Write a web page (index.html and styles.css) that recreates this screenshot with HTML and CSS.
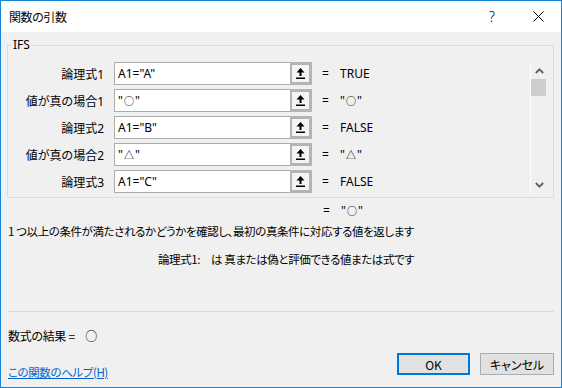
FILE: index.html
```html
<!DOCTYPE html>
<html>
<head>
<link rel="stylesheet" href="styles.css">
</head>
<body>

<div class="dialog">
  <div class="titlebar">
    <span class="title">関数の引数</span>
    <span class="tb-btn help">?</span>
    <span class="tb-btn close">
      <svg width="11" height="11" viewBox="0 0 11 11"><path d="M0.5 0.5 L10.5 10.5 M10.5 0.5 L0.5 10.5" stroke="#000" stroke-width="1" fill="none"/></svg>
    </span>
  </div>

  <div class="content">
    <fieldset class="group">
      <legend>IFS</legend>
      <div class="args">
        <div class="rows">
          <div class="row">
            <label>論理式1</label>
            <div class="field"><span class="text">A1="A"</span><span class="ref"><svg width="9" height="11" viewBox="0 0 9 11"><path d="M4.5 0 L0.5 4.5 L3.5 4.5 L3.5 8 L5.5 8 L5.5 4.5 L8.5 4.5 Z M0 9.5 H9 V11 H0 Z" fill="#000"/></svg></span></div>
            <span class="eq">=</span><span class="val">TRUE</span>
          </div>
          <div class="row">
            <label>値が真の場合1</label>
            <div class="field"><span class="text">"<span class="mark">○</span>"</span><span class="ref"><svg width="9" height="11" viewBox="0 0 9 11"><path d="M4.5 0 L0.5 4.5 L3.5 4.5 L3.5 8 L5.5 8 L5.5 4.5 L8.5 4.5 Z M0 9.5 H9 V11 H0 Z" fill="#000"/></svg></span></div>
            <span class="eq">=</span><span class="val">"<span class="mark">○</span>"</span>
          </div>
          <div class="row">
            <label>論理式2</label>
            <div class="field"><span class="text">A1="B"</span><span class="ref"><svg width="9" height="11" viewBox="0 0 9 11"><path d="M4.5 0 L0.5 4.5 L3.5 4.5 L3.5 8 L5.5 8 L5.5 4.5 L8.5 4.5 Z M0 9.5 H9 V11 H0 Z" fill="#000"/></svg></span></div>
            <span class="eq">=</span><span class="val">FALSE</span>
          </div>
          <div class="row">
            <label>値が真の場合2</label>
            <div class="field"><span class="text">"<span class="mark">△</span>"</span><span class="ref"><svg width="9" height="11" viewBox="0 0 9 11"><path d="M4.5 0 L0.5 4.5 L3.5 4.5 L3.5 8 L5.5 8 L5.5 4.5 L8.5 4.5 Z M0 9.5 H9 V11 H0 Z" fill="#000"/></svg></span></div>
            <span class="eq">=</span><span class="val">"<span class="mark">△</span>"</span>
          </div>
          <div class="row">
            <label>論理式3</label>
            <div class="field"><span class="text">A1="C"</span><span class="ref"><svg width="9" height="11" viewBox="0 0 9 11"><path d="M4.5 0 L0.5 4.5 L3.5 4.5 L3.5 8 L5.5 8 L5.5 4.5 L8.5 4.5 Z M0 9.5 H9 V11 H0 Z" fill="#000"/></svg></span></div>
            <span class="eq">=</span><span class="val">FALSE</span>
          </div>
        </div>
        <div class="scrollbar">
          <div class="sb-arrow"><svg width="9" height="6" viewBox="0 0 9 6"><polyline points="0.8,5 4.5,1.3 8.2,5" stroke="#606060" stroke-width="1.8" fill="none"/></svg></div>
          <div class="sb-thumb"></div>
          <div class="sb-track"></div>
          <div class="sb-arrow"><svg width="9" height="6" viewBox="0 0 9 6"><polyline points="0.8,1 4.5,4.7 8.2,1" stroke="#606060" stroke-width="1.8" fill="none"/></svg></div>
        </div>
      </div>
    </fieldset>

    <div class="result-line"><span class="eq">=</span><span class="val">"<span class="mark">○</span>"</span></div>
    <p class="desc">1 つ以上の条件が満たされるかどうかを確認し、最初の真条件に対応する値を返します</p>
    <p class="hint"><span class="hint-name">論理式1:</span><span class="hint-text">は 真または偽と評価できる値または式です</span></p>
    <hr class="sep">
    <p class="formula">数式の結果 = <span class="formula-val">○</span></p>

    <div class="footer">
      <a class="help-link" href="#">この関数のヘルプ(H)</a>
      <button class="btn btn-ok">OK</button>
      <button class="btn">キャンセル</button>
    </div>
  </div>
</div>

</body>
</html>
```

FILE: styles.css
```css
body {
  margin: 0;
  font-family: "Noto Sans", "Noto Sans CJK JP", sans-serif;
  font-size: 12px;
  color: #000;
  background: #f0f0f0;
}

.dialog {
  width: 562px;
  height: 388px;
  box-sizing: border-box;
  border: 1px solid #1883d7;
  background: #f0f0f0;
  overflow: hidden;
}

.titlebar {
  height: 31px;
  background: #fff;
  display: flex;
  align-items: center;
}

.title {
  font-family: "Noto Sans CJK JP", sans-serif;
  font-feature-settings: "palt";
  letter-spacing: -0.4px;
  padding-left: 8px;
  flex: 1;
}

.tb-btn {
  width: 46px;
  height: 31px;
  display: flex;
  align-items: center;
  justify-content: center;
}

.help {
  font-family: "Noto Sans", sans-serif;
  font-size: 14px;
  font-weight: 300;
}

.content {
  padding: 0 7px 0 6px;
  font-feature-settings: "palt";
}

.group {
  margin: 6px 0 0 0;
  padding: 0 0 4px 0;
  border: 1px solid #dcdcdc;
}

.group legend {
  padding: 0 2px;
  margin-left: 3px;
  line-height: 14px;
}

.args {
  display: flex;
  margin-top: 10px;
}

.rows {
  flex: 1;
  display: flex;
  flex-direction: column;
  gap: 4px;
}

.row {
  display: flex;
  align-items: center;
  height: 23px;
}

.row label {
  width: 96px;
  text-align: right;
}

.mark {
  font-size: 10px;
  padding: 0 1px;
}

.field {
  margin-left: 10px;
  width: 198px;
  height: 23px;
  box-sizing: border-box;
  border: 1px solid #acacac;
  background: #fff;
  display: flex;
}

.field .text {
  flex: 1;
  padding-left: 3px;
  line-height: 21px;
}

.ref {
  width: 22px;
  height: 23px;
  margin: -1px -1px -1px 0;
  box-sizing: border-box;
  border: 3px solid #b4b4b4;
  border-left-width: 2px;
  background: #f4f4f4;
  display: flex;
  align-items: center;
  justify-content: center;
}

.eq {
  display: inline-block;
  width: 18px;
  margin-left: 10px;
}

.scrollbar {
  width: 16px;
  margin-right: 6px;
  border-left: 1px solid #fff;
  display: flex;
  flex-direction: column;
}

.sb-arrow {
  height: 17px;
  display: flex;
  align-items: center;
  justify-content: center;
}

.sb-thumb {
  height: 17px;
  width: 15px;
  background: #cdcdcd;
}

.sb-track {
  flex: 1;
}

.result-line {
  margin-top: 5px;
  line-height: 16px;
  padding-left: 306px;
}

.desc {
  margin: 4px 0 0 1px;
  line-height: 16px;
  font-family: "Noto Sans CJK JP", sans-serif;
  font-size: 11.5px;
  letter-spacing: -0.4px;
}

.hint {
  margin: 12px 0 0 151px;
  line-height: 16px;
  font-family: "Noto Sans CJK JP", sans-serif;
  font-size: 11.5px;
  letter-spacing: -0.4px;
}

.hint-text {
  margin-left: 11px;
}

.sep {
  margin: 44px 0 0 1px;
  border: 0;
  border-top: 1px solid #dadada;
  height: 0;
}

.formula {
  margin: 16px 0 0 1px;
  line-height: 16px;
  font-family: "Noto Sans CJK JP", sans-serif;
  letter-spacing: -0.3px;
}

.formula-val {
  margin-left: 8px;
}

.footer {
  margin-top: 9px;
  display: flex;
  align-items: flex-start;
}

.help-link {
  margin: 11px 0 0 1px;
  line-height: 16px;
  color: #0066cc;
  font-family: "Noto Sans CJK JP", sans-serif;
  font-size: 11.5px;
  letter-spacing: -0.4px;
}

.btn {
  height: 22px;
  box-sizing: border-box;
  background: #e1e1e1;
  border: 1px solid #adadad;
  font-family: "Noto Sans CJK JP", sans-serif;
  font-feature-settings: "palt";
  font-size: 12px;
  padding: 0;
  width: 74px;
  margin-left: 10px;
}

.btn-ok {
  margin-left: auto;
  width: 73px;
  border: 2px solid #0078d7;
}
```
